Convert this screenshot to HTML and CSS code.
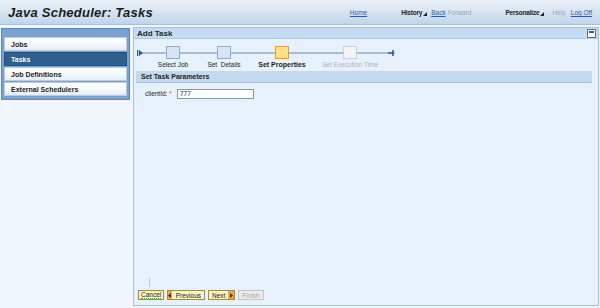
FILE: index.html
```html
<!DOCTYPE html>
<html>
<head>
<meta charset="utf-8">
<link rel="stylesheet" href="styles.css">
</head>
<body>
<div class="header">
  <div class="title">Java Scheduler: Tasks</div>
  <div class="toplinks">
    <a class="lnk home">Home</a>
    <span class="menu hist">History<svg class="tri" width="4" height="4" viewBox="0 0 4 4"><path d="M4 0 L4 4 L0 4 Z" fill="#222"/></svg></span>
    <a class="lnk back">Back</a>
    <span class="dis fwd">Forward</span>
    <span class="menu pers">Personalize<svg class="tri" width="4" height="4" viewBox="0 0 4 4"><path d="M4 0 L4 4 L0 4 Z" fill="#222"/></svg></span>
    <span class="dis help">Help</span>
    <a class="lnk logoff">Log Off</a>
  </div>
</div>
<div class="sep"></div>
<div class="main">
  <div class="navcol">
    <div class="navframe">
      <div class="navitem">Jobs</div>
      <div class="navitem sel">Tasks</div>
      <div class="navitem">Job Definitions</div>
      <div class="navitem">External Schedulers</div>
    </div>
  </div>
  <div class="content">
    <div class="ctitle">
      <span>Add Task</span>
      <span class="minbtn"><span class="minbar"></span></span>
    </div>
    <div class="cbody">
      <div class="roadmap">
        <div class="rmline"></div>
        <div class="rmstart"><svg width="6" height="6" viewBox="0 0 6 6"><rect x="0" y="0" width="1.3" height="6" fill="#2a5a94"/><path d="M2 0 L6 3 L2 6 Z" fill="#2a5a94"/></svg></div>
        <div class="step s1"><div class="sq"></div><div class="lbl">Select Job</div></div>
        <div class="step s2"><div class="sq"></div><div class="lbl">Set&nbsp; Details</div></div>
        <div class="step s3"><div class="sq cur"></div><div class="lbl bold">Set Properties</div></div>
        <div class="step s4"><div class="sq off"></div><div class="lbl grey">Set Execution Time</div></div>
        <div class="rmend"><svg width="6" height="6" viewBox="0 0 6 6"><rect x="0" y="2.3" width="5" height="1.4" fill="#2a5a94"/><rect x="4.2" y="0" width="1.6" height="6" fill="#2a5a94"/></svg></div>
      </div>
      <div class="section">Set Task Parameters</div>
      <div class="field">
        <span class="flabel">clientId:</span>
        <span class="req">*</span>
        <span class="input">777</span>
      </div>
      <div class="spacer"></div>
      <div class="cursor"></div>
      <div class="buttons">
        <span class="btn cancel"><span class="u">Cancel</span></span>
        <span class="btn prev"><span class="arr"><svg width="3" height="5" viewBox="0 0 3 5"><path d="M3 0 L0 2.5 L3 5 Z" fill="#333"/></svg></span>Previous</span>
        <span class="btn next">Next<span class="arr"><svg width="3" height="5" viewBox="0 0 3 5"><path d="M0 0 L3 2.5 L0 5 Z" fill="#333"/></svg></span></span>
        <span class="btn finish">Finish</span>
      </div>
    </div>
  </div>
</div>
</body>
</html>
```
FILE: styles.css
```css
* { box-sizing: border-box; }
html, body { margin: 0; padding: 0; }
body {
  width: 600px;
  height: 308px;
  overflow: hidden;
  background: #eef5fc;
  font-family: "Liberation Sans", Arial, sans-serif;
  font-size: 7px;
  color: #222;
}
.header {
  height: 25px;
  display: flex;
  align-items: center;
  background: linear-gradient(#eaf1f8, #dbe7f3 40%, #c0d4ea);
  border-bottom: 1px solid #a9bfd8;
}
.title {
  font-weight: bold;
  font-style: italic;
  font-size: 13px;
  letter-spacing: 0.25px;
  color: #1c1c1c;
  padding-left: 8px;
  padding-top: 1px;
}
.toplinks {
  margin-left: auto;
  display: flex;
  align-items: center;
  font-size: 6.5px;
  padding-right: 8px;
  padding-top: 1px;
}
.lnk { color: #2b5ba8; text-decoration: underline; }
.menu { font-weight: bold; color: #222; display: flex; align-items: flex-end; letter-spacing: -0.2px; }
.tri { margin-left: 1px; }
.dis { color: #9aa6b4; }
.hist { margin-left: 34px; }
.back { margin-left: 4px; }
.fwd { margin-left: 2px; }
.pers { margin-left: 34px; }
.help { margin-left: 8px; }
.logoff { margin-left: 5px; }
.sep { height: 1px; background: #f6f9fc; }
.main {
  display: flex;
  height: 282px;
}
.navcol {
  width: 133px;
  background: #f0f6fc;
  padding: 2px 0 0 1px;
}
.navframe {
  width: 129px;
  background: #7ba1cf;
  border: 1px solid #5f88bb;
  padding: 8px 2px 3px 2px;
  display: flex;
  flex-direction: column;
  gap: 1px;
}
.navitem {
  height: 14px;
  display: flex;
  align-items: center;
  padding-left: 6px;
  font-weight: bold;
  font-size: 7px;
  color: #222;
  background: linear-gradient(#ffffff, #f3f7fb 60%, #e4edf6);
  border: 1px solid #b7cce4;
}
.navitem.sel {
  background: #2e5f8e;
  border-color: #23507c;
  color: #fff;
}
.content {
  width: 466px;
  margin-top: 1px;
  height: 279px;
  border: 1px solid #a6c1e2;
  display: flex;
  flex-direction: column;
  background: #e7f1fb;
}
.ctitle {
  height: 11px;
  background: #c5dbf1;
  border-bottom: 1px solid #b0cae8;
  display: flex;
  align-items: center;
  padding-left: 3px;
  font-weight: bold;
  font-size: 8px;
  color: #1f1f1f;
}
.minbtn {
  margin-left: auto;
  margin-right: 2px;
  width: 9px;
  height: 9px;
  background: #fff;
  border: 1px solid #5c6f86;
  display: flex;
  align-items: flex-start;
  justify-content: center;
  padding-top: 1px;
}
.minbar { width: 5px; height: 2px; background: #2d5c94; }
.cbody {
  flex: 1;
  display: flex;
  flex-direction: column;
}
.roadmap {
  position: relative;
  display: flex;
  align-items: flex-start;
  margin-top: 7px;
  padding-left: 3px;
  height: 23px;
}
.rmline {
  position: absolute;
  left: 8px;
  top: 6px;
  width: 253px;
  height: 2px;
  background: #a9bcd2;
}
.rmstart { width: 13px; padding-top: 4px; position: relative; }
.rmend { width: 8px; padding-top: 4px; position: relative; }
.step {
  display: flex;
  flex-direction: column;
  align-items: center;
  position: relative;
}
.s1 { width: 46px; }
.s2 { width: 56px; }
.s3 { width: 60px; }
.s4 { width: 76px; }
.sq {
  width: 14px;
  height: 13px;
  background: #d6e5f4;
  border: 1px solid #8eadd0;
}
.sq.cur { background: #ffe184; border-color: #d3a43a; }
.sq.off { background: #f4f4f4; border-color: #c9d2dc; }
.lbl {
  margin-top: 2px;
  font-size: 6.5px;
  white-space: nowrap;
  color: #222;
}
.lbl.bold { font-weight: bold; font-size: 7px; }
.lbl.grey { color: #a9b2bd; }
.section {
  margin: 2px 6px 0 2px;
  height: 12px;
  background: #c3d9f0;
  border-bottom: 1px solid #a9c3e2;
  display: flex;
  align-items: center;
  padding-left: 5px;
  font-weight: bold;
  font-size: 7px;
}
.field {
  display: flex;
  align-items: center;
  margin-top: 5px;
  padding-left: 11px;
  height: 11px;
}
.flabel { font-size: 6.5px; width: 24px; }
.req { color: #d2691e; font-size: 7px; width: 8px; }
.input {
  width: 77px;
  height: 10px;
  background: #fff;
  border: 1px solid #7f98b4;
  font-size: 6.5px;
  padding-left: 2px;
  display: flex;
  align-items: center;
}
.spacer { flex: 1; }
.cursor {
  margin-left: 15px;
  width: 1px;
  height: 10px;
  background: #b7c9de;
}
.buttons {
  display: flex;
  gap: 3px;
  margin: 3px 0 5px 4px;
  height: 10px;
}
.btn {
  display: flex;
  align-items: center;
  height: 10px;
  font-size: 6.5px;
  background: #fff3bd;
  border: 1px solid #9d8a52;
  color: #222;
  padding: 0 3px;
}
.cancel { width: 26px; padding: 0 2px; }
.cancel .u { border-bottom: 1px dotted #3bb43b; line-height: 6px; }
.prev { width: 38px; padding: 0 3px 0 0; gap: 4px; }
.next { width: 27px; padding: 0 0 0 3px; gap: 3px; }
.arr {
  width: 7px;
  height: 8px;
  background: #f2a93a;
  display: flex;
  align-items: center;
  justify-content: center;
}
.finish {
  width: 26px;
  background: #ececec;
  border-color: #c3c3c3;
  color: #a8a8a8;
  justify-content: center;
}
```
